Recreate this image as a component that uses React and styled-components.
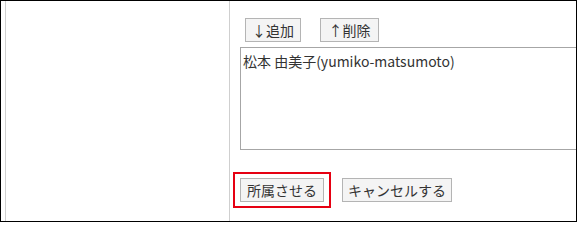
import React from "react";
import styled, { createGlobalStyle } from "styled-components";

const GlobalStyle = createGlobalStyle`
  html, body {
    margin: 0;
    padding: 0;
    background: #fff;
  }
  body {
    font-family: "Noto Sans CJK JP", "Noto Sans", sans-serif;
    font-size: 14px;
    color: #333;
  }
`;

const Frame = styled.div`
  box-sizing: border-box;
  width: 577px;
  height: 222px;
  border: 1px solid #000;
  padding-left: 4px;
  overflow: hidden;
`;

const Row = styled.div`
  display: grid;
  grid-template-columns: 224px 1fr;
  height: 100%;
  border-left: 1px solid #cfcfcf;
`;

const LabelCell = styled.div`
  border-right: 1px solid #cfcfcf;
`;

const FieldCell = styled.div`
  display: flex;
  flex-direction: column;
  padding: 17px 0 0 10px;
`;

const MoveBar = styled.div`
  display: flex;
  gap: 19px;
  padding-left: 5px;
`;

const Button = styled.button`
  box-sizing: border-box;
  height: 24px;
  width: ${(p) => p.$w}px;
  padding: 0;
  border: 1px solid #b4b4b4;
  border-radius: 0;
  background: #f4f4f4;
  color: #333;
  font-family: "Noto Sans CJK JP", "Noto Sans", sans-serif;
  font-size: 14px;
  line-height: 22px;
  white-space: nowrap;
  cursor: pointer;
`;

const MemberList = styled.div`
  box-sizing: border-box;
  width: 360px;
  height: 103px;
  margin-top: 5px;
  padding: 4px 2px;
  border: 1px solid #a6a6a6;
  line-height: 18px;
  color: #333;
`;

const Actions = styled.div`
  display: flex;
  align-items: center;
  gap: 18px;
  margin-top: 28px;
`;

const Marked = styled.span`
  position: relative;
  display: inline-flex;

  &::after {
    content: "";
    position: absolute;
    inset: -6px -7px -6px -7px;
    border: 2px solid #e60012;
    pointer-events: none;
  }
`;

export default function App() {
  return (
    <>
      <GlobalStyle />
      <Frame>
        <Row>
          <LabelCell />
          <FieldCell>
            <MoveBar>
              <Button $w={56}>↓追加</Button>
              <Button $w={59}>↑削除</Button>
            </MoveBar>
            <MemberList>松本 由美子(yumiko-matsumoto)</MemberList>
            <Actions>
              <Marked>
                <Button $w={84}>所属させる</Button>
              </Marked>
              <Button $w={110}>キャンセルする</Button>
            </Actions>
          </FieldCell>
        </Row>
      </Frame>
    </>
  );
}
